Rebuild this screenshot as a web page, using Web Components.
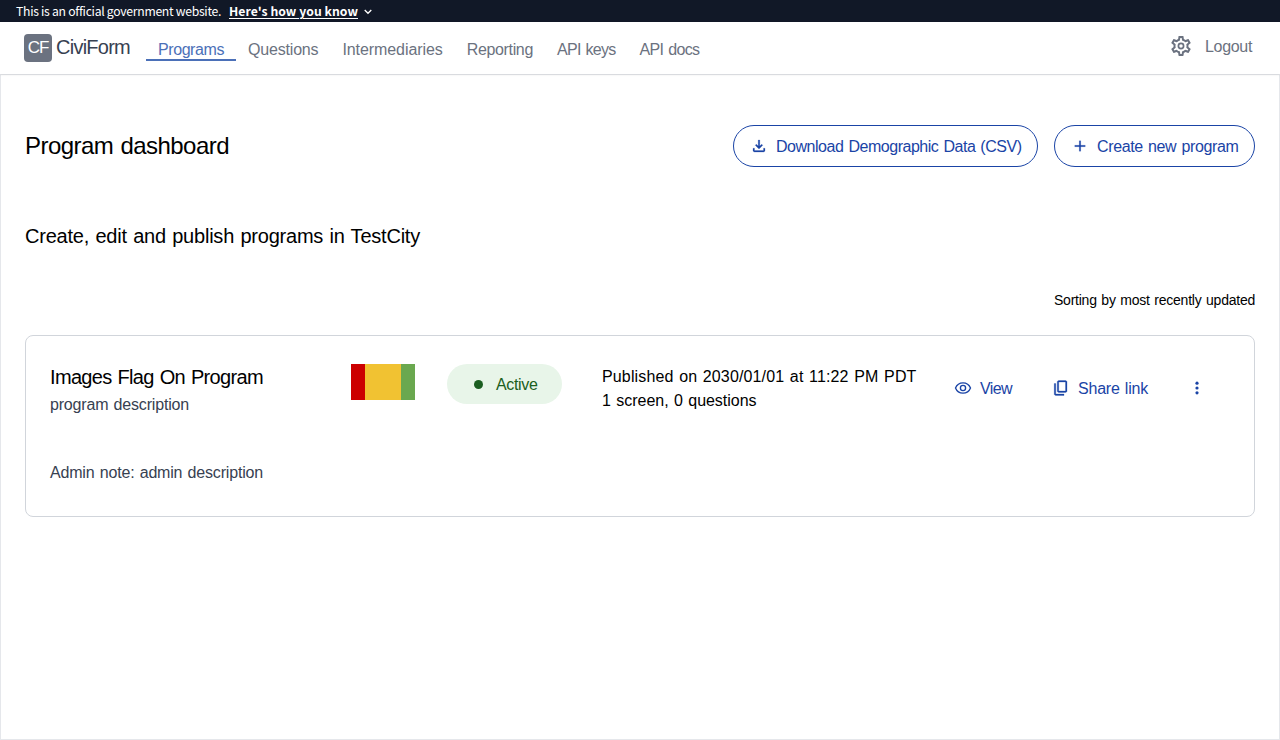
<!DOCTYPE html>
<html lang="en">
<head>
<meta charset="utf-8">
<title>Program dashboard</title>
<style>
html, body { margin: 0; height: 100%; background: #fff; }
body { font: 16px/24px "Liberation Sans", Arial, sans-serif; word-spacing: 1px; color: #000; overflow: hidden; }
</style>
</head>
<body>
<admin-page></admin-page>
<script>
function component(name, html, setup) {
  const template = document.createElement('template');
  template.innerHTML = html;
  customElements.define(name, class extends HTMLElement {
    constructor() {
      super();
      this.attachShadow({ mode: 'open' }).append(template.content.cloneNode(true));
    }
    connectedCallback() { if (setup) setup(this, this.shadowRoot); }
  });
}

component('admin-page', `
<style>
:host { display: flex; flex-direction: column; height: 740px; }
</style>
<gov-banner></gov-banner>
<admin-nav></admin-nav>
<program-dashboard></program-dashboard>`);

component('gov-banner', `
<style>
:host { display: flex; align-items: center; height: 22px; padding-left: 16px; background: #111827; color: #fff; word-spacing: 0;
  font: 12.2px/22px "Noto Sans CJK SC", "Noto Sans", sans-serif; flex: none; }
b { font-weight: 700; margin-left: 8px; }
b fit-text { text-decoration: underline; text-underline-offset: 2px; }
svg { margin: 2px 0 0 6px; }
</style>
<fit-text width="205">This is an official government website.</fit-text>
<b><fit-text width="129">Here's how you know</fit-text></b>
<svg width="8" height="6" viewBox="0 0 8 6" fill="none" stroke="#fff" stroke-width="1.3"><path d="M.7 1 4 4.3 7.3 1"/></svg>`);

component('admin-nav', `
<style>
:host { display: flex; height: 52px; flex: none; box-sizing: border-box; padding: 0 28px 0 24px; background: #fff; color: #6b7280;
  box-shadow: 0 1px 2px rgba(0,0,0,.08); position: relative; }
.logo { width: 28px; height: 28px; margin-top: 12px; border-radius: 4px; background: #6b7280; color: #fff; text-align: center; font-size: 17px; line-height: 28px; }
.name { margin: 12px 16px 0 4px; font-size: 20px; line-height: 27px; color: #374151; }
nav { display: flex; }
.tools { display: flex; margin-left: auto; padding-top: 12px; gap: 12px; }
.tools fit-text { line-height: 26px; }
</style>
<div class="logo"><fit-text width="20.5">CF</fit-text></div>
<div class="name"><fit-text width="74">CiviForm</fit-text></div>
<nav>
<nav-link active><fit-text width="66">Programs</fit-text></nav-link>
<nav-link><fit-text width="70.4">Questions</fit-text></nav-link>
<nav-link><fit-text width="100.3">Intermediaries</fit-text></nav-link>
<nav-link><fit-text width="66.3">Reporting</fit-text></nav-link>
<nav-link><fit-text width="58.5">API keys</fit-text></nav-link>
<nav-link><fit-text width="60">API docs</fit-text></nav-link>
</nav>
<div class="tools">
<svg width="24" height="24" viewBox="0 0 24 24" fill="#6b7280"><path d="M19.43 12.98c.04-.32.07-.64.07-.98s-.03-.66-.07-.98l2.11-1.65c.19-.15.24-.42.12-.64l-2-3.46c-.09-.16-.26-.25-.44-.25-.06 0-.12.01-.17.03l-2.49 1c-.52-.4-1.08-.73-1.69-.98l-.38-2.65C14.46 2.18 14.25 2 14 2h-4c-.25 0-.46.18-.49.42l-.38 2.65c-.61.25-1.17.59-1.69.98l-2.49-1c-.06-.02-.12-.03-.18-.03-.17 0-.34.09-.43.25l-2 3.46c-.13.22-.07.49.12.64l2.11 1.65c-.04.32-.07.65-.07.98s.03.66.07.98l-2.11 1.65c-.19.15-.24.42-.12.64l2 3.46c.09.16.26.25.44.25.06 0 .12-.01.17-.03l2.49-1c.52.4 1.08.73 1.69.98l.38 2.65c.03.24.24.42.49.42h4c.25 0 .46-.18.49-.42l.38-2.65c.61-.25 1.17-.59 1.69-.98l2.49 1c.06.02.12.03.18.03.17 0 .34-.09.43-.25l2-3.46c.12-.22.07-.49-.12-.64l-2.11-1.65zm-1.98-1.71c.04.31.05.52.05.73s-.02.43-.05.73l-.14 1.13.89.7 1.08.84-.7 1.21-1.27-.51-1.04-.42-.9.68c-.43.32-.84.56-1.25.73l-1.06.43-.16 1.13-.2 1.35h-1.4l-.19-1.35-.16-1.13-1.06-.43c-.43-.18-.83-.41-1.23-.71l-.91-.7-1.06.43-1.27.51-.7-1.21 1.08-.84.89-.7-.14-1.13c-.03-.31-.05-.54-.05-.74s.02-.43.05-.73l.14-1.13-.89-.7-1.08-.84.7-1.21 1.27.51 1.04.42.9-.68c.43-.32.84-.56 1.25-.73l1.06-.43.16-1.13.2-1.35h1.39l.19 1.35.16 1.13 1.06.43c.43.18.83.41 1.23.71l.91.7 1.06-.43 1.27-.51.7 1.21-1.07.85-.89.7.14 1.13z"/><circle cx="12" cy="12" r="2.6" fill="none" stroke="#6b7280" stroke-width="1.7"/></svg>
<fit-text width="47">Logout</fit-text>
</div>`);

component('nav-link', `
<style>
:host { display: block; box-sizing: border-box; height: 24px; margin-top: 15px; padding: 0 12px; line-height: 26px; }
:host([active]) { color: #4b70b8; border-bottom: 2px solid #4b70b8; }
</style><slot></slot>`);

component('program-dashboard', `
<style>
:host { display: flex; flex-direction: column; flex: 1; box-sizing: border-box; border: 1px solid #e5e7eb; padding: 50px 24px 0; }
header { display: flex; align-items: center; gap: 16px; height: 42px; }
h1, h2 { font-weight: 400; margin: 0; }
h1 { font-size: 24px; line-height: 32px; margin-right: auto; }
h2 { font-size: 20px; line-height: 28px; margin-top: 55px; }
.sort { align-self: flex-end; font-size: 14px; line-height: 20px; margin: 40px 0 25px; }
</style>
<header>
<h1><fit-text width="204">Program dashboard</fit-text></h1>
<pill-button>
<svg slot="icon" width="18" height="18" viewBox="0 0 24 24" fill="currentColor"><path d="M12 16 7 11l1.4-1.45 2.6 2.6V4h2v8.15l2.6-2.6L17 11zM6 20q-.825 0-1.412-.587Q4 18.825 4 18v-3h2v3h12v-3h2v3q0 .825-.587 1.413Q18.825 20 18 20z" stroke="currentColor" stroke-width=".3"/></svg>
<fit-text width="245.5">Download Demographic Data (CSV)</fit-text></pill-button>
<pill-button>
<svg slot="icon" width="18" height="18" viewBox="0 0 24 24" fill="currentColor"><path d="M11 19v-6H5v-2h6V5h2v6h6v2h-6v6z" stroke="currentColor" stroke-width=".2"/></svg>
<fit-text width="141.5">Create new program</fit-text></pill-button>
</header>
<h2><fit-text width="395">Create, edit and publish programs in TestCity</fit-text></h2>
<div class="sort"><fit-text width="201">Sorting by most recently updated</fit-text></div>
<program-card></program-card>`);

component('pill-button', `
<style>
:host { display: flex; align-items: center; box-sizing: border-box; height: 42px; padding: 0 15.5px 0 16px; gap: 8px;
  border: 1px solid #1a44a6; border-radius: 21px; color: #1a44a6; }
::slotted(fit-text) { padding-top: 1px; }
</style><slot name="icon"></slot><slot></slot>`);

component('program-card', `
<style>
:host { display: flex; box-sizing: border-box; height: 182px; border: 1px solid #d1d5db; border-radius: 8px; padding: 28px 24px 0; }
.about { width: 301px; color: #374151; }
h3 { font-size: 20px; line-height: 28px; height: 28px; font-weight: 400; color: #000; margin: -1px 0 2px; }
.note { margin-top: 44px; }
.flag { width: 64px; height: 36px; display: flex; background: #f1c232; justify-content: space-between; }
.flag i { width: 14px; background: #c00; }
.flag i + i { background: #6aa84f; }
.status { display: flex; align-items: center; box-sizing: border-box; width: 115px; height: 40px; margin: 0 40px 0 32px; padding-left: 26.5px; gap: 13.5px;
  border-radius: 20px; background: #e8f5e9; color: #1b5e20; }
.status span { width: 9px; height: 9px; border-radius: 50%; background: currentColor; }
.status fit-text { padding-top: 1px; }
.meta { width: 352px; padding-top: 1px; }
.actions { display: flex; height: 24px; margin-top: 12px; align-items: center; color: #1a44a6; }
.actions svg { display: block; }
.actions fit-text { margin: 0 40px 0 8px; padding-top: 2px; }
</style>
<div class="about">
<h3><fit-text width="213">Images Flag On Program</fit-text></h3>
<div><fit-text width="139">program description</fit-text></div>
<div class="note"><fit-text width="213">Admin note: admin description</fit-text></div>
</div>
<div class="flag"><i></i><i></i></div>
<div class="status"><span></span><fit-text width="41.5">Active</fit-text></div>
<div class="meta"><fit-text width="314.5">Published on 2030/01/01 at 11:22 PM PDT</fit-text><br><fit-text width="154.5">1 screen, 0 questions</fit-text></div>
<div class="actions">
<svg width="18" height="18" viewBox="0 0 18 18" fill="none" stroke="currentColor" stroke-width="1.35"><path d="M1.5 9C2.8 5.8 5.6 3.9 9 3.9s6.2 1.9 7.5 5.1c-1.3 3.2-4.1 5.1-7.5 5.1S2.8 12.2 1.5 9z"/><circle cx="9" cy="9" r="2.6"/></svg>
<fit-text width="32">View</fit-text>
<svg width="18" height="18" viewBox="0 0 24 24" fill="currentColor" stroke="currentColor" stroke-width=".35"><path d="M9 18q-.825 0-1.412-.587Q7 16.825 7 16V4q0-.825.588-1.413Q8.175 2 9 2h9q.825 0 1.413.587Q20 3.175 20 4v12q0 .825-.587 1.413Q18.825 18 18 18zm0-2h9V4H9v12zm-4 6q-.825 0-1.413-.587Q3 20.825 3 20V6h2v14h11v2z"/></svg>
<fit-text width="70">Share link</fit-text>
<svg width="18" height="18" viewBox="0 0 18 18" fill="currentColor"><circle cx="9" cy="4.2" r="1.6"/><circle cx="9" cy="9" r="1.6"/><circle cx="9" cy="13.8" r="1.6"/></svg>
</div>`);

/* Spreads a single line of text over the given width by tracking. */
component('fit-text', `
<style>
:host { display: inline-block; white-space: nowrap; flex: none; }
</style><slot></slot>`, host => {
  const range = document.createRange();
  range.selectNodeContents(host);
  const natural = range.getBoundingClientRect().width;
  const width = Number(host.getAttribute('width'));
  host.style.width = width + 'px';
  host.style.letterSpacing = (width - natural) / host.textContent.length + 'px';
});
</script>
</body>
</html>
